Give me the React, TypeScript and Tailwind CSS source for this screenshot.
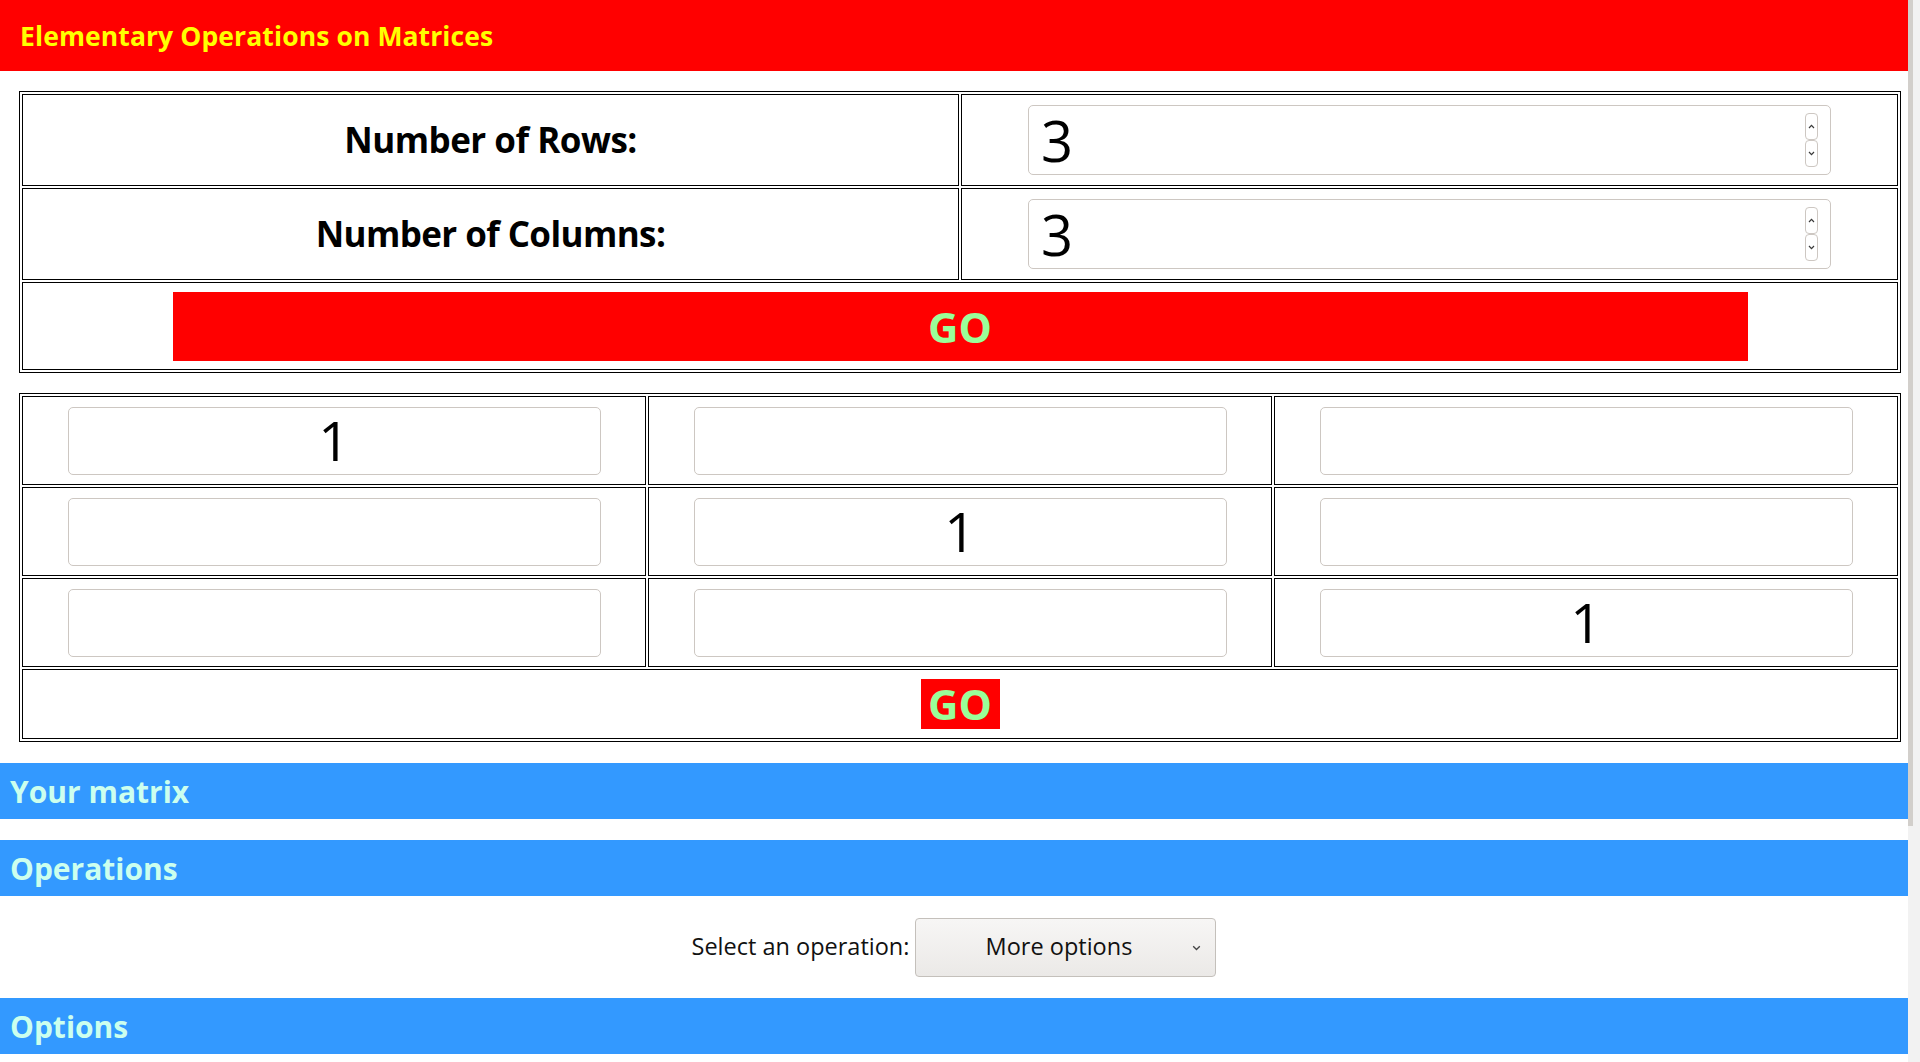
import React from "react";

const font = "font-['Open_Sans',sans-serif]";

function UpArrow() {
  return (
    <svg width="7" height="5" viewBox="0 0 7 5">
      <path d="M1 4 L3.5 1.3 L6 4" fill="none" stroke="#3a3a3a" strokeWidth="1.2" />
    </svg>
  );
}

function DownArrow() {
  return (
    <svg width="7" height="5" viewBox="0 0 7 5">
      <path d="M1 1 L3.5 3.7 L6 1" fill="none" stroke="#3a3a3a" strokeWidth="1.2" />
    </svg>
  );
}

function Spinner() {
  return (
    <div className="mr-[12px] flex flex-col">
      <div className="flex h-[27px] w-[13px] items-center justify-center rounded-[4px] border border-[#cdc7c2] bg-white">
        <UpArrow />
      </div>
      <div className="flex h-[27px] w-[13px] items-center justify-center rounded-[4px] border border-[#cdc7c2] bg-white">
        <DownArrow />
      </div>
    </div>
  );
}

function NumberField({ value }: { value: string }) {
  return (
    <div className="flex h-[70px] w-[803px] items-center rounded-[5px] border border-[#cdc7c2] bg-white">
      <input
        type="text"
        defaultValue={value}
        className={`h-full min-w-0 flex-1 bg-transparent pl-[12px] text-[56px] text-black outline-none ${font}`}
      />
      <Spinner />
    </div>
  );
}

function MatrixCell({ value }: { value: string }) {
  return (
    <td className="border border-black p-0">
      <div className="flex h-[87px] items-center justify-center">
        <input
          type="text"
          defaultValue={value}
          className={`h-[68px] w-[533px] rounded-[5px] border border-[#cdc7c2] bg-white text-center text-[55px] text-black outline-none ${font}`}
        />
      </div>
    </td>
  );
}

function SectionBar({ title }: { title: string }) {
  return (
    <div className="flex h-[56px] items-center bg-[#3399ff] pl-[10px]">
      <span className="text-[30px] font-bold text-[#ccffee]">{title}</span>
    </div>
  );
}

export default function App() {
  const matrix = [
    ["1", "", ""],
    ["", "1", ""],
    ["", "", "1"],
  ];

  return (
    <div className={`flex h-[1062px] w-[1920px] overflow-hidden bg-white text-black ${font}`}>
      <div className="min-w-0 flex-1">
        <header className="flex h-[71px] items-center bg-[#ff0000] pl-[20px] pt-[2px]">
          <h1 className="text-[26.5px] font-bold tracking-[0.1px] text-[#ffff00]">Elementary Operations on Matrices</h1>
        </header>

        <table className="ml-[19px] mt-[20px] w-[1882px] table-fixed border-separate border-spacing-[2px] border border-black">
          <tbody>
            <tr>
              <td className="border border-black p-0">
                <div className="flex h-[90px] items-center justify-center text-[35px] font-bold tracking-[-0.5px]">
                  Number of Rows:
                </div>
              </td>
              <td className="border border-black p-0">
                <div className="flex h-[90px] items-center justify-center">
                  <NumberField value="3" />
                </div>
              </td>
            </tr>
            <tr>
              <td className="border border-black p-0">
                <div className="flex h-[90px] items-center justify-center text-[35px] font-bold tracking-[-0.6px]">
                  Number of Columns:
                </div>
              </td>
              <td className="border border-black p-0">
                <div className="flex h-[90px] items-center justify-center">
                  <NumberField value="3" />
                </div>
              </td>
            </tr>
            <tr>
              <td colSpan={2} className="border border-black p-0">
                <div className="flex h-[86px] items-center justify-center">
                  <button className="h-[69px] w-[1575px] bg-[#ff0000] text-[42px] font-bold leading-[69px] text-[#99ff99]">
                    GO
                  </button>
                </div>
              </td>
            </tr>
          </tbody>
        </table>

        <table className="ml-[19px] mt-[20px] w-[1882px] table-fixed border-separate border-spacing-[2px] border border-black">
          <tbody>
            {matrix.map((row, i) => (
              <tr key={i}>
                {row.map((v, j) => (
                  <MatrixCell key={j} value={v} />
                ))}
              </tr>
            ))}
            <tr>
              <td colSpan={3} className="border border-black p-0">
                <div className="flex h-[68px] items-center justify-center">
                  <button className="h-[50px] w-[79px] bg-[#ff0000] text-[42px] font-bold leading-[50px] text-[#99ff99]">
                    GO
                  </button>
                </div>
              </td>
            </tr>
          </tbody>
        </table>

        <div className="mt-[21px]">
          <SectionBar title="Your matrix" />
        </div>
        <div className="mt-[21px]">
          <SectionBar title="Operations" />
        </div>
        <div className="flex h-[102px] items-center justify-center gap-[6px]">
          <span className="text-[23.5px] text-[#111]">Select an operation:</span>
          <button className="relative flex h-[59px] w-[301px] items-center rounded-[4px] border border-[#c4c0bb] bg-linear-to-b from-[#f7f6f5] to-[#ebe9e7]">
            <span className="w-full pr-[14px] text-center text-[23.5px] text-[#111]">More options</span>
            <svg className="absolute right-[14px] top-[26px]" width="9" height="6" viewBox="0 0 9 6">
              <path d="M1.2 1.2 L4.5 4.5 L7.8 1.2" fill="none" stroke="#444" strokeWidth="1.3" />
            </svg>
          </button>
        </div>
        <SectionBar title="Options" />
        <div className="h-[300px]" />
      </div>

      <div className="flex h-full w-[12px] bg-[#f2f2f2]">
        <div className="h-[826px] w-[5px] bg-[#d2cfcb]" />
      </div>
    </div>
  );
}
